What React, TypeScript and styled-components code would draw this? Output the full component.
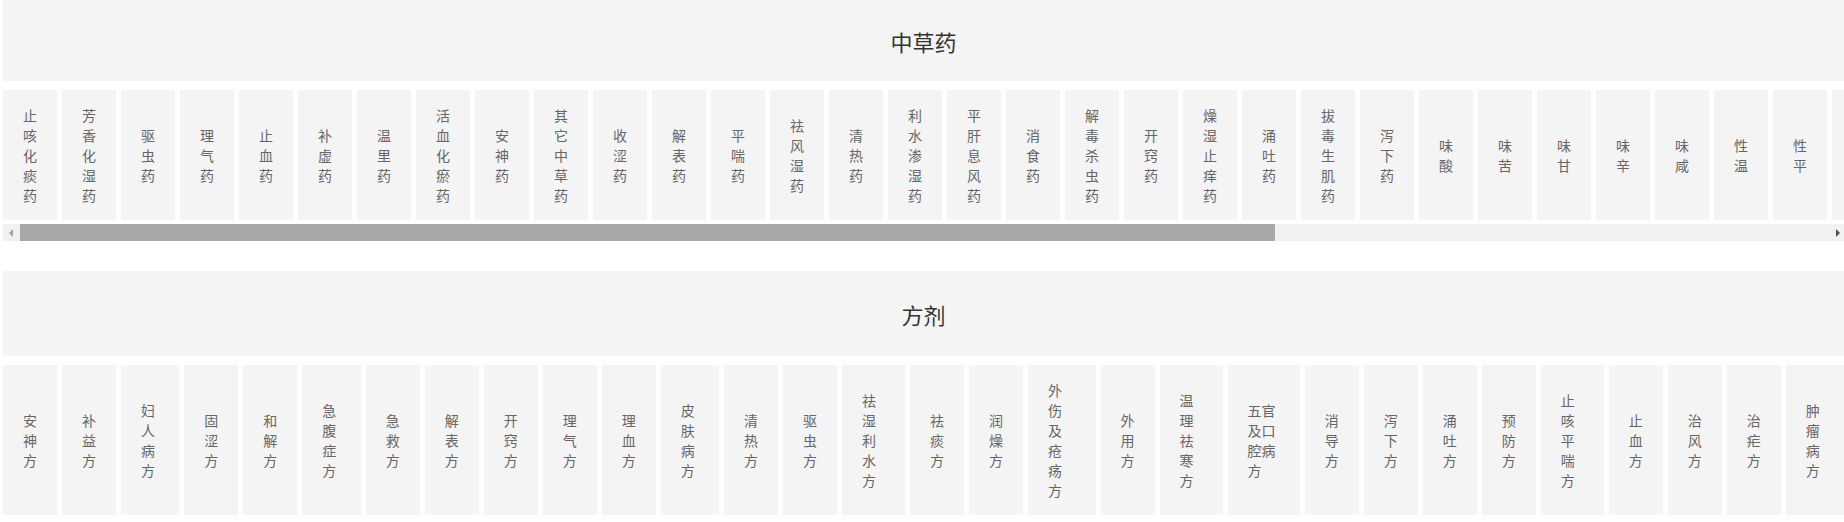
import React, { useLayoutEffect, useRef, useState } from 'react';
import styled, { createGlobalStyle } from 'styled-components';

const GlobalStyle = createGlobalStyle`
  html, body {
    margin: 0;
    padding: 0;
    background: #ffffff;
  }
  body {
    font-family: "Noto Sans CJK SC", "Noto Sans", sans-serif;
  }
`;

const Page = styled.main`
  display: flex;
  flex-direction: column;
  padding-left: 3px;
`;

const Section = styled.section<{ $spaceAfter: number }>`
  display: flex;
  flex-direction: column;
  gap: 9px;
  margin-bottom: ${(p) => p.$spaceAfter}px;
`;

const Banner = styled.h2<{ $height: number }>`
  margin: 0;
  height: ${(p) => p.$height}px;
  background: #f4f4f4;
  display: flex;
  align-items: center;
  justify-content: center;
  font-size: 22px;
  font-weight: normal;
  color: #333333;
`;

const ScrollFrame = styled.div`
  display: flex;
  flex-direction: column;
  gap: 4px;
  min-width: 0;
`;

const Strip = styled.nav<{ $scroll: boolean }>`
  display: flex;
  gap: 5px;
  overflow-x: ${(p) => (p.$scroll ? 'auto' : 'hidden')};
  overflow-y: hidden;
  scrollbar-width: none;
`;

const Tile = styled.a`
  flex: 0 1 auto;
  display: flex;
  flex-direction: column;
  justify-content: center;
  padding: 15px 20px;
  background: #f4f4f4;
  color: #666666;
  font-size: 14px;
  line-height: 20px;
  text-decoration: none;
  cursor: pointer;
`;

const Label = styled.span`
  display: block;
  text-align: left;
`;

const Bar = styled.div`
  display: flex;
  height: 17px;
  background: #f1f1f1;
`;

const BarButton = styled.button<{ $dir: 'left' | 'right'; $active: boolean }>`
  flex: 0 0 17px;
  height: 17px;
  padding: 0;
  border: 0;
  background: #f1f1f1;
  display: flex;
  align-items: center;
  justify-content: ${(p) => (p.$dir === 'left' ? 'flex-start' : 'flex-end')};
  padding-left: ${(p) => (p.$dir === 'left' ? 6 : 0)}px;
  padding-right: ${(p) => (p.$dir === 'right' ? 4 : 0)}px;

  &::before {
    content: '';
    width: 0;
    height: 0;
    border-top: 4px solid transparent;
    border-bottom: 4px solid transparent;
    ${(p) =>
      p.$dir === 'left'
        ? `border-right: 4px solid ${p.$active ? '#505050' : '#a3a3a3'};`
        : `border-left: 4px solid ${p.$active ? '#505050' : '#a3a3a3'};`}
  }
`;

const Track = styled.div`
  flex: 1 1 auto;
  display: flex;
  align-items: stretch;
  min-width: 0;
`;

const Thumb = styled.div`
  background: #a8a8a8;
  height: 17px;
`;

function HScroller({ items }: { items: string[] }) {
  const ref = useRef<HTMLElement>(null);
  const [metrics, setMetrics] = useState({ ratio: 0.695, offset: 0, atEnd: false });

  useLayoutEffect(() => {
    const el = ref.current;
    if (!el) return;
    const update = () => {
      const sw = el.scrollWidth || 1;
      setMetrics({
        ratio: Math.min(1, el.clientWidth / sw),
        offset: el.scrollLeft / sw,
        atEnd: el.scrollLeft + el.clientWidth >= sw - 1,
      });
    };
    update();
    el.addEventListener('scroll', update);
    window.addEventListener('resize', update);
    return () => {
      el.removeEventListener('scroll', update);
      window.removeEventListener('resize', update);
    };
  }, []);

  return (
    <ScrollFrame>
      <Strip $scroll ref={ref}>
        {items.map((h) => (
          <Tile key={h}>
            <Label>{h}</Label>
          </Tile>
        ))}
      </Strip>
      <Bar>
        <BarButton $dir="left" $active={metrics.offset > 0} aria-label="left" />
        <Track>
          <Thumb
            style={{
              width: `${metrics.ratio * 100}%`,
              marginLeft: `${metrics.offset * 100}%`,
            }}
          />
        </Track>
        <BarButton $dir="right" $active={!metrics.atEnd} aria-label="right" />
      </Bar>
    </ScrollFrame>
  );
}

const herbs = [
  '止咳化痰药', '芳香化湿药', '驱虫药', '理气药', '止血药', '补虚药', '温里药', '活血化瘀药',
  '安神药', '其它中草药', '收涩药', '解表药', '平喘药', '祛风湿药', '清热药', '利水渗湿药',
  '平肝息风药', '消食药', '解毒杀虫药', '开窍药', '燥湿止痒药', '涌吐药', '拔毒生肌药', '泻下药',
  '味酸', '味苦', '味甘', '味辛', '味咸', '性温', '性平', '性寒', '性凉', '性热',
  '归心经', '归肝经', '归脾经', '归肺经', '归肾经', '归胃经', '归胆经', '归大肠经', '归小肠经',
  '归膀胱经', '有毒',
];

const formulas = [
  '安神方', '补益方', '妇人病方', '固涩方', '和解方', '急腹症方', '急救方', '解表方', '开窍方',
  '理气方', '理血方', '皮肤病方', '清热方', '驱虫方', '祛湿利水方', '祛痰方', '润燥方',
  '外伤及疮疡方', '外用方', '温理祛寒方', '五官及口腔病方', '消导方', '泻下方', '涌吐方',
  '预防方', '止咳平喘方', '止血方', '治风方', '治疟方', '肿瘤病方',
];

export default function App() {
  return (
    <>
      <GlobalStyle />
      <Page>
        <Section $spaceAfter={30}>
          <Banner $height={81}>中草药</Banner>
          <HScroller items={herbs} />
        </Section>
        <Section $spaceAfter={0}>
          <Banner $height={85}>方剂</Banner>
          <Strip $scroll={false}>
            {formulas.map((f) => (
              <Tile key={f}>
                <Label>{f}</Label>
              </Tile>
            ))}
          </Strip>
        </Section>
      </Page>
    </>
  );
}
